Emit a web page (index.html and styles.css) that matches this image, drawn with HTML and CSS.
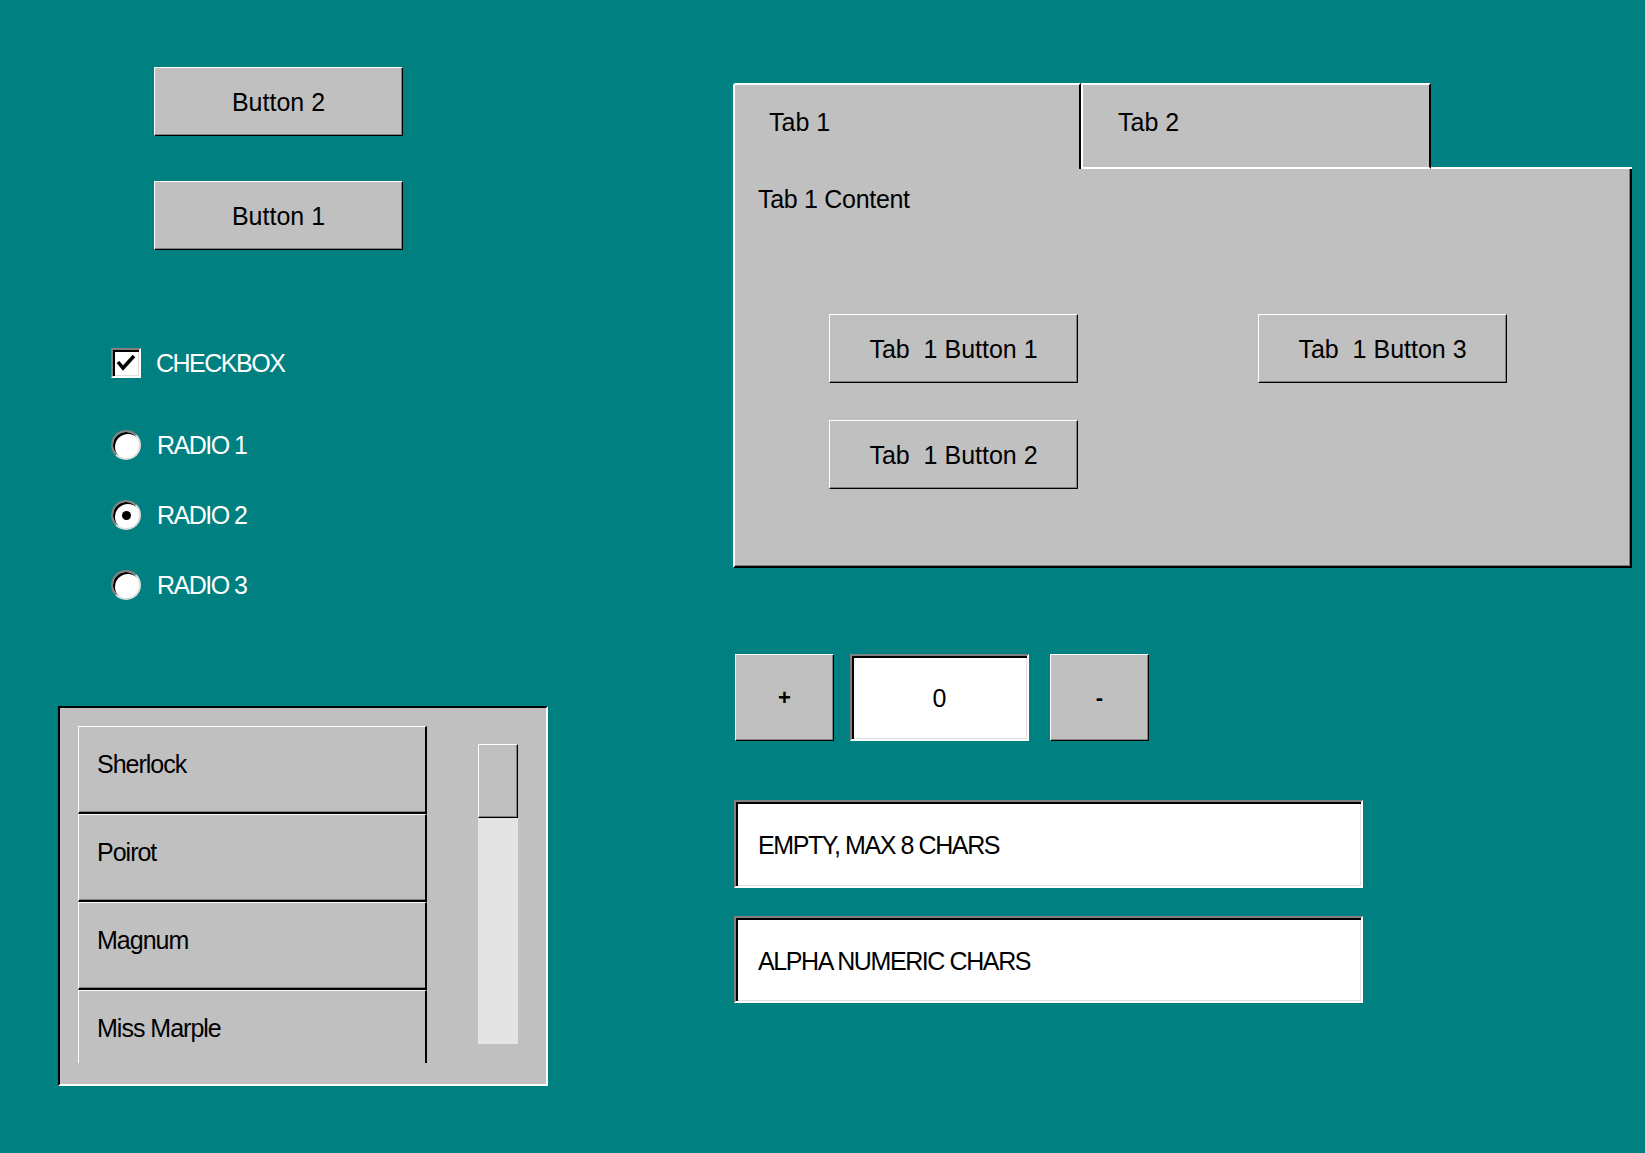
FILE: index.html
```html
<!DOCTYPE html>
<html>
<head>
<meta charset="utf-8">
<link rel="stylesheet" href="styles.css">
</head>
<body>
<div class="page">
  <div class="left">
    <button class="btn btn-top">Button 2</button>
    <button class="btn btn-second">Button 1</button>

    <div class="option check-row">
      <span class="checkbox">
        <svg width="26" height="26" viewBox="0 0 26 26"><path d="M5 12 L10 18 L21 6" fill="none" stroke="#000" stroke-width="3.5"/></svg>
      </span>
      <span class="opt-label">CHECKBOX</span>
    </div>
    <div class="option radio-row first-radio">
      <span class="radio"></span>
      <span class="opt-label">RADIO 1</span>
    </div>
    <div class="option radio-row">
      <span class="radio checked"><span class="dot"></span></span>
      <span class="opt-label">RADIO 2</span>
    </div>
    <div class="option radio-row">
      <span class="radio"></span>
      <span class="opt-label">RADIO 3</span>
    </div>

    <div class="listbox">
      <div class="list-view">
        <div class="list-item">Sherlock</div>
        <div class="list-item">Poirot</div>
        <div class="list-item">Magnum</div>
        <div class="list-item">Miss Marple</div>
      </div>
      <div class="scrollbar">
        <div class="thumb"></div>
      </div>
    </div>
  </div>

  <div class="right">
    <div class="tabcontrol">
      <div class="tabs">
        <div class="tab tab-active">Tab 1</div>
        <div class="tab tab-inactive">Tab 2</div>
        <div class="tab-rest"></div>
      </div>
      <div class="tab-panel">
        <div class="panel-title">Tab 1 Content</div>
        <div class="panel-grid">
          <button class="btn">Tab  1 Button 1</button>
          <button class="btn">Tab  1 Button 3</button>
          <button class="btn">Tab  1 Button 2</button>
        </div>
      </div>
    </div>

    <div class="spinner">
      <button class="btn spin-btn">+</button>
      <div class="field spin-field">0</div>
      <button class="btn spin-btn minus">-</button>
    </div>

    <div class="field text-field tf1">EMPTY, MAX 8 CHARS</div>
    <div class="field text-field tf2">ALPHA NUMERIC CHARS</div>
  </div>
</div>
</body>
</html>
```
FILE: styles.css
```css
html, body {
  margin: 0;
  padding: 0;
}
body {
  background: #008080;
  font-family: "Liberation Sans", Arial, sans-serif;
  font-size: 25px;
  line-height: 30px;
  color: #000;
  width: 1645px;
  height: 1153px;
  overflow: hidden;
}
.page {
  display: flex;
  align-items: flex-start;
}
.left {
  width: 548px;
  display: flex;
  flex-direction: column;
  align-items: flex-start;
  padding-top: 67px;
}
.btn {
  box-sizing: border-box;
  width: 249px;
  height: 69px;
  padding: 0;
  margin: 0;
  background: #c0c0c0;
  border: 1px solid;
  border-color: #fff #000 #000 #fff;
  box-shadow: inset -1px -1px 0 #808080;
  font: inherit;
  color: #000;
  white-space: pre;
  display: flex;
  align-items: center;
  justify-content: center;
}
.btn-top {
  margin-left: 154px;
}
.btn-second {
  margin-left: 154px;
  margin-top: 45px;
}
.option {
  display: flex;
  align-items: center;
  height: 30px;
  margin-left: 111px;
  color: #fff;
}
.opt-label {
  letter-spacing: -1.5px;
}
.check-row {
  margin-top: 98px;
}
.check-row .opt-label {
  margin-left: 15px;
}
.radio-row {
  margin-top: 40px;
}
.radio-row .opt-label {
  margin-left: 16px;
}
.first-radio {
  margin-top: 52px;
}
.checkbox {
  box-sizing: border-box;
  width: 30px;
  height: 30px;
  background: #fff;
  border: 2px solid;
  border-color: #808080 #fff #fff #808080;
  box-shadow: inset 2px 2px 0 #000, inset -1px -1px 0 #dfdfdf;
  display: flex;
  align-items: center;
  justify-content: center;
}
.checkbox svg {
  display: block;
}
.radio {
  box-sizing: border-box;
  width: 30px;
  height: 30px;
  border-radius: 50%;
  background: #fff;
  border: 2px solid;
  border-color: #808080 #dfdfdf #dfdfdf #808080;
  box-shadow: inset 2px 2px 0 #000;
  display: flex;
  align-items: center;
  justify-content: center;
}
.dot {
  width: 9px;
  height: 9px;
  border-radius: 50%;
  background: #000;
  margin: 1px 0 0 1px;
}
.listbox {
  box-sizing: border-box;
  margin-top: 106px;
  margin-left: 58px;
  width: 490px;
  height: 380px;
  background: #c0c0c0;
  border: 2px solid;
  border-color: #000 #fff #fff #000;
  padding: 18px 0 0 18px;
  display: flex;
  align-items: flex-start;
}
.list-view {
  width: 349px;
  height: 337px;
  overflow: hidden;
}
.list-item {
  box-sizing: border-box;
  height: 88px;
  border-top: 1px solid #fff;
  border-left: 1px solid #fff;
  border-right: 2px solid #000;
  border-bottom: 2px solid #000;
  box-shadow: inset 0 -1px 0 #808080;
  padding: 22px 0 0 18px;
  letter-spacing: -1px;
}
.scrollbar {
  margin-left: 51px;
  margin-top: 18px;
  width: 40px;
  height: 300px;
  background: #e4e4e4;
}
.thumb {
  box-sizing: border-box;
  height: 74px;
  background: #c0c0c0;
  border: 1px solid;
  border-color: #fff #000 #000 #fff;
  box-shadow: inset -1px -1px 0 #808080;
}
.right {
  margin-left: 185px;
  padding-top: 83px;
  width: 899px;
}
.tabs {
  display: flex;
  height: 86px;
}
.tab {
  box-sizing: border-box;
  height: 86px;
  background: #c0c0c0;
  border-top: 2px solid #fff;
  border-left: 2px solid #fff;
  border-right: 2px solid #000;
  padding-top: 22px;
}
.tab-active {
  width: 348px;
  padding-left: 34px;
  border-top-left-radius: 3px;
}
.tab-inactive {
  width: 350px;
  border-bottom: 2px solid #fff;
  padding-left: 35px;
}
.tab-rest {
  flex: 1;
  height: 86px;
  box-sizing: border-box;
  border-bottom: 2px solid #fff;
}
.tab-panel {
  box-sizing: border-box;
  height: 399px;
  background: #c0c0c0;
  border-left: 2px solid #fff;
  border-right: 2px solid #000;
  border-bottom: 2px solid #000;
  box-shadow: inset -1px -1px 0 #808080;
  padding: 15px 0 0 23px;
}
.panel-title {
  height: 30px;
  letter-spacing: -0.3px;
}
.panel-grid {
  margin-top: 100px;
  margin-left: 71px;
  display: grid;
  grid-template-columns: 249px 249px;
  column-gap: 180px;
  row-gap: 37px;
}
.spinner {
  margin-top: 86px;
  margin-left: 2px;
  display: flex;
  align-items: flex-start;
}
.spin-btn {
  width: 99px;
  height: 87px;
  font-size: 22px;
  font-weight: bold;
}
.field {
  box-sizing: border-box;
  background: #fff;
  border: 2px solid;
  border-color: #808080 #fff #fff #808080;
  box-shadow: inset 2px 2px 0 #000, inset -1px -1px 0 #dfdfdf;
  display: flex;
  align-items: center;
}
.spin-field {
  width: 179px;
  height: 87px;
  margin-left: 16px;
  justify-content: center;
}
.minus {
  margin-left: 21px;
}
.text-field {
  width: 629px;
  height: 88px;
  margin-left: 1px;
  padding: 2px 0 0 22px;
  letter-spacing: -1.4px;
}
.tf1 {
  margin-top: 59px;
}
.tf2 {
  margin-top: 28px;
  height: 87px;
}
```
